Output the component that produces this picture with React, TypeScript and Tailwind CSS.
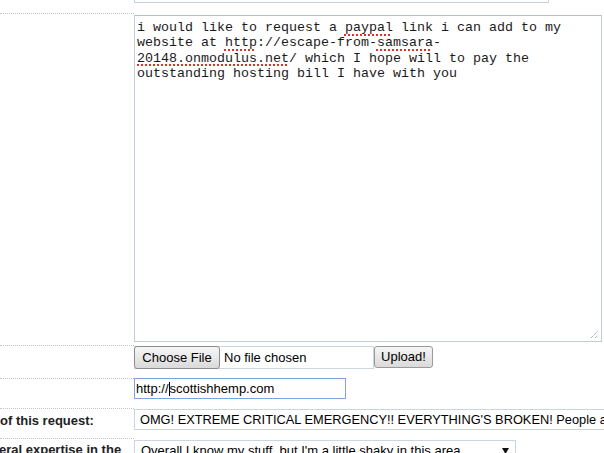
import React from "react";

const sq = "underline decoration-dotted decoration-[#e0302a] decoration-[1.5px] underline-offset-[3px]";

export default function App() {
  return (
    <div className="w-[604px] h-[453px] overflow-hidden bg-white font-['Liberation_Sans',Arial,sans-serif] text-[13px] text-black">
      <div className="-mt-[20px] flex flex-col">
        {/* Row A (partially visible) */}
        <div className="flex h-[33px]">
          <div className="w-[134px] shrink-0 border-t border-dotted border-[#c4c4c4]" />
          <div className="h-[23px] w-[415px] border border-[#c6d2de] bg-white" />
        </div>

        {/* Row B textarea */}
        <div className="flex h-[332px]">
          <div className="w-[134px] shrink-0 border-t border-dotted border-[#c4c4c4]" />
          <div className="relative mt-[2px] h-[327px] w-[468px] border border-[#bfccd9] border-t-[#b3c2d1] bg-white px-[2px] pt-[4px] font-['Liberation_Mono','Courier_New',monospace] text-[13.33px] leading-[15.3px] text-[#1a1a1a]">
            <div className="whitespace-pre">
              {"i would like to request a "}
              <span className={sq}>paypal</span>
              {" link i can add to my"}
              <br />
              {"website at "}
              <span className={sq}>http</span>
              {"://escape-from-"}
              <span className={sq}>samsara</span>
              {"-"}
              <br />
              <span className={sq}>20148.onmodulus.net</span>
              {"/ which I hope will to pay the"}
              <br />
              {"outstanding hosting bill I have with you"}
            </div>
            <svg className="absolute right-[2px] bottom-[2px]" width="9" height="9" viewBox="0 0 9 9">
              <line x1="1" y1="8" x2="8" y2="1" stroke="#8a8a8a" strokeWidth="1" strokeDasharray="1 1" />
              <line x1="5" y1="8" x2="8" y2="5" stroke="#8a8a8a" strokeWidth="1" strokeDasharray="1 1" />
            </svg>
          </div>
        </div>

        {/* Row C file */}
        <div className="flex h-[33px]">
          <div className="w-[134px] shrink-0 border-t border-dotted border-[#c4c4c4]" />
          <div className="mt-[1px] flex items-start">
            <div className="flex h-[23px] w-[240px] items-center border-y border-r border-[#cbd6e2] bg-white">
              <button className="-my-px flex h-[23px] w-[86px] items-center justify-center rounded-[3px] border border-[#8c8c8c] bg-gradient-to-b from-[#f6f6f6] to-[#dadada] text-[13px] text-black">
                Choose File
              </button>
              <span className="ml-[4px] text-[13px]">No file chosen</span>
            </div>
            <button className="flex h-[22px] w-[59px] items-center justify-center rounded-[3px] border border-[#9a9a9a] bg-gradient-to-b from-[#f6f6f6] to-[#dadada] text-[13px] text-black">
              Upload!
            </button>
          </div>
        </div>

        {/* Row D url */}
        <div className="flex h-[30px]">
          <div className="w-[134px] shrink-0 border-t border-dotted border-[#c4c4c4]" />
          <div className="flex h-[21px] w-[212px] items-center border border-[#7aa6db] bg-white pl-[1px] text-[13px]">
            <span>http://</span>
            <span className="inline-block h-[14px] w-px bg-black" />
            <span>scottishhemp.com</span>
          </div>
        </div>

        {/* Row E */}
        <div className="flex h-[30px]">
          <div className="w-[134px] shrink-0 overflow-hidden border-t border-dotted border-[#c4c4c4] pt-[4px]">
            <div className="whitespace-nowrap text-[13px] font-bold leading-[15px] text-[#222]">of this request:</div>
          </div>
          <div className="mt-[1px] flex h-[21px] w-[480px] shrink-0 items-center overflow-hidden border border-[#c9d5e1] bg-white pl-[5px] text-[12.8px] whitespace-nowrap">
            OMG! EXTREME CRITICAL EMERGENCY!! EVERYTHING&apos;S BROKEN! People are dying
          </div>
        </div>

        {/* Row F */}
        <div className="flex h-[40px]">
          <div className="w-[134px] shrink-0 overflow-hidden border-t border-dotted border-[#c4c4c4] pt-[3px]">
            <div className="-ml-[1px] whitespace-nowrap text-[13px] font-bold leading-[15px] text-[#222]">eral expertise in the</div>
          </div>
          <div className="mt-[2px] flex h-[22px] w-[382px] shrink-0 items-center justify-between border border-[#c9d5e1] bg-white pl-[6px] pr-[6px] text-[13px]">
            <span className="whitespace-nowrap">Overall I know my stuff, but I&apos;m a little shaky in this area</span>
            <svg width="7" height="6" viewBox="0 0 7 6">
              <path d="M0 0 H7 L3.5 6 Z" fill="#111" />
            </svg>
          </div>
        </div>
      </div>
    </div>
  );
}
